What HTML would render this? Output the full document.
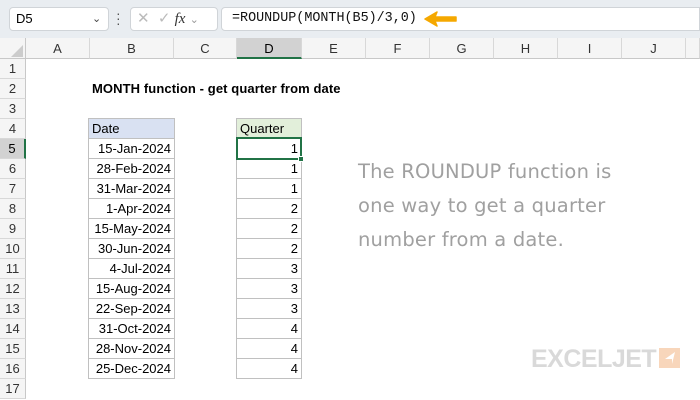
<!DOCTYPE html>
<html><head><style>
body{margin:0;width:700px;height:400px;overflow:hidden;background:#fff;font-family:"Liberation Sans",Calibri,sans-serif;position:relative}
div{position:absolute;box-sizing:border-box}
.t{font-size:13px;color:#000;white-space:nowrap}
.ch{top:38px;height:21px;background:#f5f5f5;border-right:1px solid #d8d8d8;border-bottom:1px solid #c8c8c8;text-align:center;font-size:13px;line-height:21px;color:#333}
.rh{left:0;width:26px;height:20px;background:#f5f5f5;border-bottom:1px solid #d8d8d8;border-right:1px solid #c8c8c8;text-align:center;font-size:13px;line-height:20px;color:#333}
.c{height:21px;border:1px solid #c0c0c0;font-size:13px;line-height:19px;padding:0 3px;text-align:right}
</style></head><body>
<div style="left:0;top:0;width:700px;height:38px;background:#e9edf1"></div>
<div style="left:9px;top:7px;width:100px;height:24px;background:#fff;border:1px solid #d0d4d8;border-radius:4px;font-size:13px;line-height:22px;padding-left:6px">D5<span style="position:absolute;left:82px;top:0;font-size:11px;color:#444">&#8964;</span></div>
<div style="left:116px;top:11px;width:3px;height:16px;font-size:14px;line-height:5px;color:#555">·<br>·<br>·</div>
<div style="left:130px;top:7px;width:88px;height:24px;background:#fff;border:1px solid #d0d4d8;border-radius:4px;font-size:15px;color:#bbb;line-height:22px;padding-left:6px">✕ &nbsp;✓ <i style="font-family:'Liberation Serif',serif;color:#333">fx</i> <span style="font-size:11px;color:#999">&#8964;</span></div>
<div style="left:221px;top:7px;width:479px;height:24px;background:#fff;border:1px solid #d0d4d8;border-radius:4px 0 0 4px;font-family:'Liberation Mono',monospace;font-size:13.4px;line-height:22px;padding-left:10px;color:#111">=ROUNDUP(MONTH(B5)/3,0)</div>
<svg style="position:absolute;left:423px;top:11px" width="36" height="16"><path d="M2 8 L14 1 L12 6 L33 6 L33 10 L12 10 L14 15 Z" fill="#f5a800" stroke="#f5a800" stroke-linejoin="round" stroke-width="1.5"/></svg>
<div style="left:0;top:38px;width:26px;height:21px;background:#f5f5f5;border-right:1px solid #c8c8c8;border-bottom:1px solid #c8c8c8"></div>
<svg style="position:absolute;left:10px;top:44px" width="14" height="14"><path d="M13 1 L13 13 L1 13Z" fill="#ccc"/></svg>
<div id="g"></div>
<div class="t" style="left:92px;top:81px;font-weight:bold;letter-spacing:0.1px">MONTH function - get quarter from date</div>
<div style="left:358px;top:155px;font-family:'Comic Sans MS','DejaVu Sans',cursive;font-size:19.5px;line-height:34px;color:#a0a0a0;letter-spacing:0.2px">The ROUNDUP function is<br>one way to get a quarter<br>number from a date.</div>
<div style="left:531px;top:345px;font-family:'Liberation Sans',sans-serif;font-weight:bold;font-size:25px;color:#d9d9d9;letter-spacing:-0.5px;line-height:28px">EXCELJET</div>
<div style="left:659px;top:348px;width:21px;height:20px;background:#f8d6bb"></div>
<svg style="position:absolute;left:662px;top:350px" width="16" height="16"><path d="M13 2 L3 9 L10 9 L10 14Z" fill="#fff"/></svg>
<script>
var cols=[["A",26,90],["B",90,174],["C",174,237],["D",237,302],["E",302,366],["F",366,430],["G",430,494],["H",494,558],["I",558,622],["J",622,686],["",686,700]];
var h="";
cols.forEach(function(c){h+='<div class="ch" style="left:'+c[1]+'px;width:'+(c[2]-c[1])+'px;'+(c[0]=="D"?'background:#d2d2d2;border-bottom:2px solid #217346;color:#000':'')+'">'+c[0]+'</div>';});
for(var r=1;r<=17;r++){var y=59+(r-1)*20;h+='<div class="rh" style="top:'+y+'px;'+(r==5?'background:#d2d2d2;border-right:2px solid #217346;color:#000':'')+'">'+r+'</div>';}
var d=["15-Jan-2024","28-Feb-2024","31-Mar-2024","1-Apr-2024","15-May-2024","30-Jun-2024","4-Jul-2024","15-Aug-2024","22-Sep-2024","31-Oct-2024","28-Nov-2024","25-Dec-2024"];
var q=[1,1,1,2,2,2,3,3,3,4,4,4];
h+='<div class="c" style="left:88px;top:118px;width:87px;background:#d9e1f2;text-align:left">Date</div>';
h+='<div class="c" style="left:236px;top:118px;width:66px;background:#e2efda;text-align:left">Quarter</div>';
for(var i=0;i<12;i++){var y=138+i*20;
h+='<div class="c" style="left:88px;top:'+y+'px;width:87px">'+d[i]+'</div>';
h+='<div class="c" style="left:236px;top:'+y+'px;width:66px">'+q[i]+'</div>';}
h+='<div style="left:236px;top:137px;width:66px;height:23px;border:2px solid #217346"></div>';
h+='<div style="left:298px;top:156px;width:6px;height:6px;background:#217346;border:1px solid #fff"></div>';
document.getElementById("g").outerHTML=h;
</script>
</body></html>
